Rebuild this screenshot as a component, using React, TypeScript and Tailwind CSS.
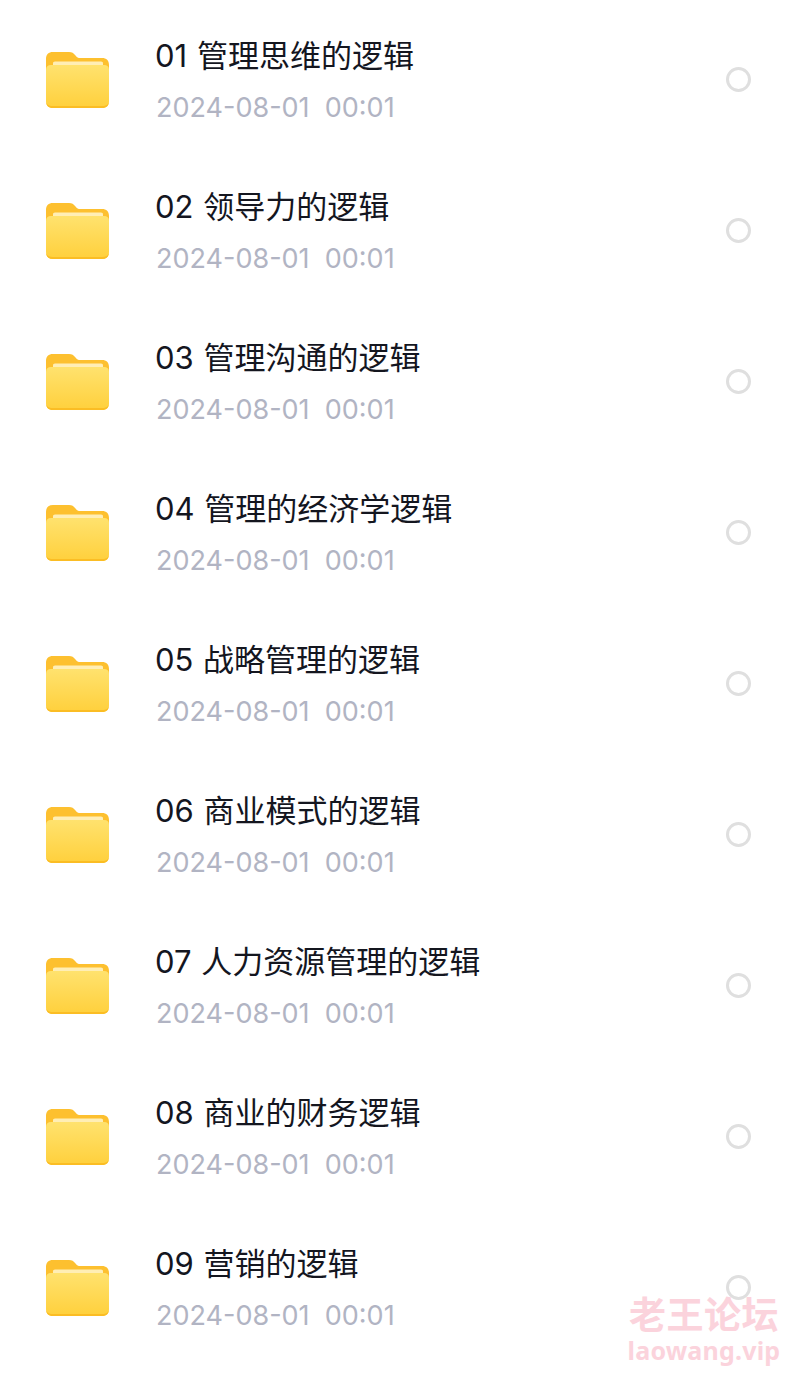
import React from 'react';

const items = [
  '01 管理思维的逻辑',
  '02 领导力的逻辑',
  '03 管理沟通的逻辑',
  '04 管理的经济学逻辑',
  '05 战略管理的逻辑',
  '06 商业模式的逻辑',
  '07 人力资源管理的逻辑',
  '08 商业的财务逻辑',
  '09 营销的逻辑',
];

const FolderIcon: React.FC<{ id: number }> = ({ id }) => (
  <svg width="65" height="58" viewBox="0 0 65 58" fill="none" className="shrink-0">
    <defs>
      <linearGradient id={`front-${id}`} x1="0" y1="0" x2="0" y2="1">
        <stop offset="0" stopColor="#ffe26e" />
        <stop offset="1" stopColor="#ffd03c" />
      </linearGradient>
    </defs>
    <path
      d="M1 8C1 3.5 3.5 1 8 1H24C27 1 28.5 2 30.5 4.5C32 6.5 33 7 35.5 7H57C61.5 7 64 9.5 64 14V30H1Z"
      fill="#fdc02f"
    />
    <path d="M8 12.5C8 11.3 8.8 10.6 10 10.6H56C57.2 10.6 58 11.3 58 12.5V20H8Z" fill="#ffeeb5" />
    <path
      d="M1 19C1 15.6 3 14 6 14H59C62.2 14 64 15.6 64 19V50C64 54.5 61.5 57 57 57H8C3.5 57 1 54.5 1 50Z"
      fill={`url(#front-${id})`}
    />
    <path d="M1 50C1 54.5 3.5 57 8 57H57C61.5 57 64 54.5 64 50C64 53 61.5 55 57 55H8C3.5 55 1 53 1 50Z" fill="#fbbd24" />
  </svg>
);

export default function App() {
  return (
    <div
      className="relative w-[800px] h-[1375px] overflow-hidden bg-white pt-[4px]"
      style={{ fontFamily: 'Inter, "Noto Sans CJK SC", sans-serif' }}
    >
      {items.map((title, i) => (
        <div key={title} className="flex items-center h-[151px] pl-[45px] pr-[49px]">
          <FolderIcon id={i} />
          <div className="flex-1 pl-[45px] pt-[3px]">
            <div className="text-[31px] leading-[40px] text-[#14161f] [word-spacing:1px]">{title}</div>
            <div className="mt-[14px] pl-px text-[27px] leading-[36px] text-[#b1b4c3] whitespace-pre">2024-08-01  00:01</div>
          </div>
          <div className="w-[25px] h-[25px] rounded-full border-[3px] border-[#dfdfdf]" />
        </div>
      ))}

      {/* Watermark */}
      <div className="absolute left-[624px] top-[1295px] w-[160px] text-center text-[#fbd3dc] font-bold">
        <div className="text-[37px] leading-[42px] tracking-[0.5px]">老王论坛</div>
        <div className="text-[25px] leading-[26px] tracking-[0.2px]" style={{ fontFamily: '"Noto Sans", sans-serif' }}>laowang.vip</div>
      </div>
    </div>
  );
}
